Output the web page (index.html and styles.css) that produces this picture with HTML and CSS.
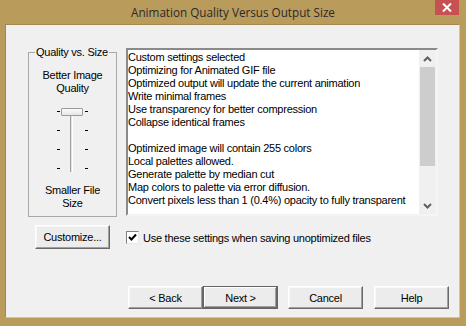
FILE: index.html
```html
<!DOCTYPE html>
<html lang="en">
<head>
    <meta charset="UTF-8">
    <meta name="viewport" content="width=device-width, initial-scale=1.0">
    <title>Animation Quality Versus Output Size</title>
    <link rel="stylesheet" href="styles.css">
</head>
<body>
    <div class="window">
        <div class="titlebar">
            <span class="title">Animation Quality Versus Output Size</span>
            <span class="close">
                <svg width="10" height="9" viewBox="0 0 10 9"><path d="M1 0.5 L9 8.5 M9 0.5 L1 8.5" stroke="#fff" stroke-width="2"/></svg>
            </span>
        </div>
        <div class="client">
            <div class="top-row">
                <fieldset class="group">
                    <legend>Quality vs. Size</legend>
                    <div class="caption">Better Image<br>Quality</div>
                    <div class="slider">
                        <div class="ticks">
                            <i></i><i></i><i></i><i></i>
                        </div>
                        <div class="ticks">
                            <i></i><i></i><i></i><i></i>
                        </div>
                        <span class="track"></span>
                        <span class="thumb"></span>
                    </div>
                    <div class="caption low">Smaller File<br>Size</div>
                </fieldset>
                <div class="listbox">
                    <div class="list-text">
                        <div>Custom settings selected</div>
                        <div>Optimizing for Animated GIF file</div>
                        <div>Optimized output will update the current animation</div>
                        <div>Write minimal frames</div>
                        <div>Use transparency for better compression</div>
                        <div>Collapse identical frames</div>
                        <div class="blank"></div>
                        <div>Optimized image will contain 255 colors</div>
                        <div>Local palettes allowed.</div>
                        <div>Generate palette by median cut</div>
                        <div>Map colors to palette via error diffusion.</div>
                        <div>Convert pixels less than 1 (0.4%) opacity to fully transparent</div>
                    </div>
                    <div class="scrollbar">
                        <span class="arrow">
                            <svg width="9" height="6" viewBox="0 0 9 6"><path d="M1 5 L4.5 1.5 L8 5" fill="none" stroke="#606060" stroke-width="2"/></svg>
                        </span>
                        <span class="thumb-v"></span>
                        <span class="rest"></span>
                        <span class="arrow">
                            <svg width="9" height="6" viewBox="0 0 9 6"><path d="M1 1 L4.5 4.5 L8 1" fill="none" stroke="#606060" stroke-width="2"/></svg>
                        </span>
                    </div>
                </div>
            </div>
            <div class="option-row">
                <button class="btn customize">Customize...</button>
                <label class="check">
                    <span class="box">
                        <svg width="9" height="9" viewBox="0 0 9 9"><path d="M1 4 L3.5 6.5 L8 1.5" fill="none" stroke="#000" stroke-width="2"/></svg>
                    </span>
                    Use these settings when saving unoptimized files
                </label>
            </div>
            <div class="button-row">
                <button class="btn">&lt; Back</button>
                <button class="btn default">Next &gt;</button>
                <button class="btn cancel">Cancel</button>
                <button class="btn help">Help</button>
            </div>
        </div>
    </div>
</body>
</html>
```

FILE: styles.css
```css
*{
    margin: 0;
    padding: 0;
    box-sizing: border-box;
}
body{
    background-color: #b99b5c;
    font-family: "Liberation Sans", Arial, sans-serif;
    font-size: 11px;
    letter-spacing: -0.25px;
    color: #000;
}
.window{
    width: 466px;
    height: 326px;
    background-color: #b99b5c;
}
.titlebar{
    position: relative;
    height: 24px;
    text-align: center;
}
.title{
    display: inline-block;
    padding-top: 4px;
    font-family: "Open Sans", "Noto Sans", sans-serif;
    font-size: 11.7px;
    letter-spacing: 0;
    line-height: 16px;
    color: #2a2a2a;
}
.close{
    position: absolute;
    top: 0;
    left: 435px;
    width: 24px;
    height: 15px;
    background-color: #c75050;
    display: flex;
    align-items: center;
    justify-content: center;
}
.client{
    margin-left: 5px;
    width: 455px;
    height: 294px;
    background-color: #f0f0f0;
    border-top: 1px solid #a3874f;
    border-left: 1px solid #a3874f;
    border-right: 1px solid #d9c49a;
    border-bottom: 1px solid #d9c49a;
    display: flex;
    flex-direction: column;
}
.top-row{
    display: flex;
    align-items: flex-start;
    padding: 21px 0 0 22px;
}
.group{
    width: 89px;
    height: 171px;
    border: 1px solid #a8a8a8;
    padding: 10px 0 0;
    display: flex;
    flex-direction: column;
    align-items: center;
}
.group legend{
    margin-left: 6px;
    padding: 0 1px;
    line-height: 13px;
}
.caption{
    line-height: 13px;
    text-align: center;
}
.caption.low{
    margin-top: 12px;
}
.slider{
    position: relative;
    width: 31px;
    height: 64px;
    margin-top: 13px;
    display: flex;
    justify-content: space-between;
}
.ticks{
    display: flex;
    flex-direction: column;
    justify-content: space-between;
    padding: 3px 0 3px;
}
.ticks i{
    display: block;
    width: 3px;
    height: 1px;
    background-color: #000;
}
.track{
    position: absolute;
    left: 13px;
    top: 0;
    width: 3px;
    height: 64px;
    border-left: 1px solid #a0a0a0;
    border-right: 1px solid #fff;
    background-color: #e3e3e3;
}
.thumb{
    position: absolute;
    left: 4px;
    top: 0;
    width: 22px;
    height: 8px;
    background: linear-gradient(#fafafa, #e6e6e6);
    border: 1px solid #9a9a9a;
    border-radius: 1px;
}
.listbox{
    margin: 2px 0 0 9px;
    width: 312px;
    height: 168px;
    background-color: #fff;
    border-top: 2px solid #8a8a8a;
    border-left: 2px solid #8a8a8a;
    border-right: 2px solid #f4f4f4;
    border-bottom: 2px solid #f4f4f4;
    display: flex;
}
.list-text{
    flex: 1;
    padding: 1px 0 0 0;
    line-height: 13px;
    white-space: nowrap;
    overflow: hidden;
}
.list-text .blank{
    height: 13px;
}
.scrollbar{
    width: 17px;
    background-color: #f0f0f0;
    display: flex;
    flex-direction: column;
}
.arrow{
    height: 17px;
    display: flex;
    align-items: center;
    justify-content: center;
}
.thumb-v{
    margin: 0 1px;
    height: 99px;
    background-color: #cdcdcd;
}
.rest{
    flex: 1;
}
.option-row{
    display: flex;
    align-items: center;
    padding: 8px 0 0 29px;
}
.btn{
    width: 75px;
    height: 23px;
    font-family: "Liberation Sans", Arial, sans-serif;
    font-size: 11px;
    letter-spacing: -0.25px;
    color: #000;
    background-color: #ececec;
    border-top: 1px solid #fff;
    border-left: 1px solid #fff;
    border-right: 1px solid #696969;
    border-bottom: 1px solid #696969;
    box-shadow: inset -1px -1px #a0a0a0, inset 1px 1px #f8f8f8;
}
.customize{
    height: 24px;
}
.check{
    display: flex;
    align-items: center;
    margin-left: 16px;
    margin-top: 1px;
}
.box{
    width: 13px;
    height: 13px;
    margin-right: 4px;
    background-color: #fff;
    border-top: 1px solid #808080;
    border-left: 1px solid #808080;
    border-right: 1px solid #e8e8e8;
    border-bottom: 1px solid #e8e8e8;
    display: flex;
    align-items: center;
    justify-content: center;
}
.button-row{
    display: flex;
    margin-top: auto;
    padding: 0 0 8px 122px;
}
.default{
    border: 1px solid #646464;
    box-shadow: inset -1px -1px #696969, inset 1px 1px #fff, inset -2px -2px #a0a0a0;
}
.cancel{
    margin-left: 10px;
}
.help{
    margin-left: 11px;
}
```
